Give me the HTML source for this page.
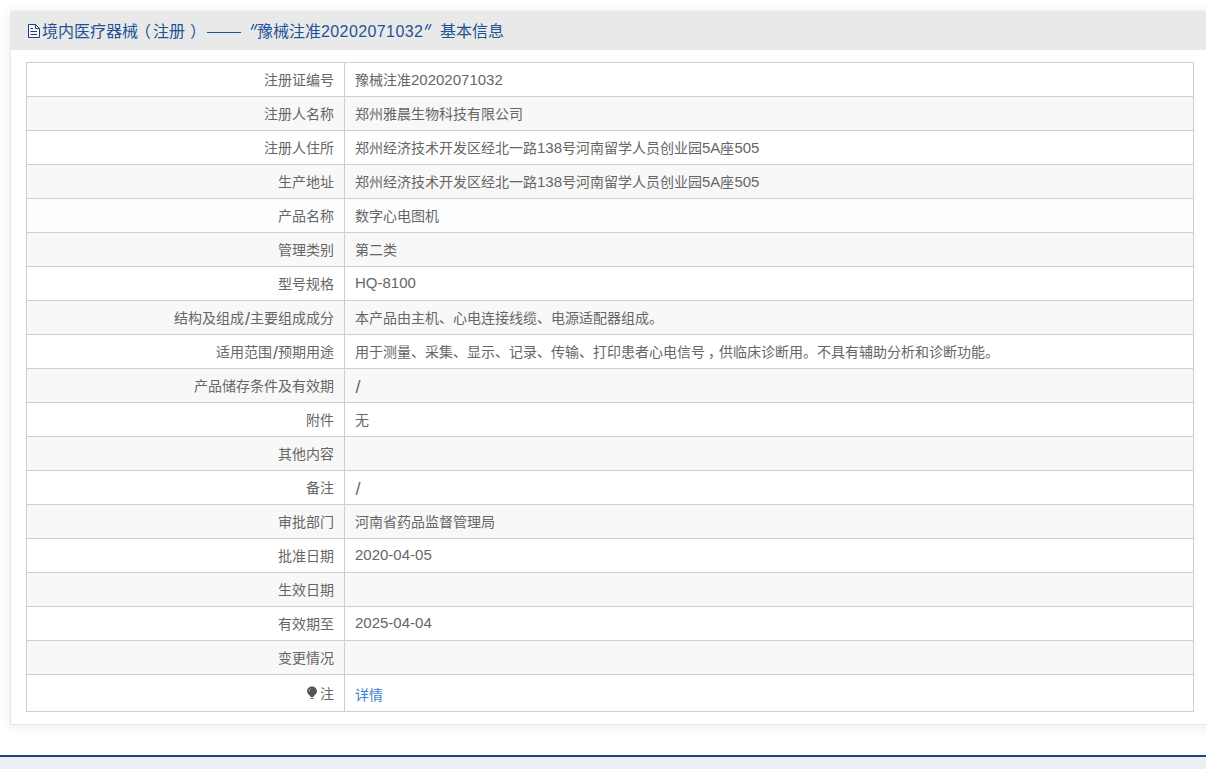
<!DOCTYPE html>
<html lang="zh-CN">
<head>
<meta charset="utf-8">
<style>
html,body{margin:0;padding:0;}
body{width:1206px;height:769px;overflow:hidden;background:#fff;font-family:"Liberation Sans",sans-serif;position:relative;}
.panel{position:absolute;left:10px;top:10px;width:1210px;height:715px;background:#fff;border:1px solid #e6e6e6;border-top-color:#f3f3f3;box-sizing:border-box;box-shadow:0 2px 12px rgba(0,0,0,0.08);}
.hd{position:absolute;left:-1px;top:0;right:0;height:39px;background:#e9e9e9;}
.hd .s{position:absolute;top:10px;font-size:16px;line-height:22px;color:#1e5495;white-space:nowrap;}
.hd .dg{letter-spacing:0.4px;}
.hd .q{position:absolute;}
.hd .dash{position:absolute;top:21px;height:1px;background:#1e5495;}
.hd .ico{position:absolute;left:17px;top:12px;}
table{position:absolute;left:15px;top:51px;width:1168px;border-collapse:collapse;font-size:14px;color:#666;}
td{border:1px solid #cfcfcf;height:34px;padding:0 10px 2px;box-sizing:border-box;white-space:nowrap;}
td.l{width:318px;text-align:right;}
tr.g td{background:#f8f8f8;}
tr.h td{background:#fcfdfe;}
tr.last td{height:37px;padding-top:2px;padding-bottom:0;}
.bulb{display:inline-block;vertical-align:top;margin:2px 3px 0 0;}
.n{font-size:15px;line-height:1;}
.sl{font-size:18px;line-height:1;margin:0 0 0 0.5px;position:relative;top:2px;}
a{color:#3d7fcf;text-decoration:none;}
.foot{position:absolute;left:0;top:755px;width:1206px;height:2px;background:#174a7c;}
.foot2{position:absolute;left:0;top:757px;width:1206px;height:12px;background:#eceef1;}
</style>
</head>
<body>
<div class="panel">
  <div class="hd">
    <svg class="ico" width="15" height="17" viewBox="0 0 15 17"><path d="M1.5 1.5H8.5L12.5 5.5V14.5H1.5Z" fill="#f3f7fb" stroke="#1f3f75" stroke-width="1"/><path d="M8.5 1.5V5.5H12.5" fill="none" stroke="#1f3f75" stroke-width="1"/><path d="M3.5 5.5H6M3.5 8.5H10M3.5 11.5H10" stroke="#1f3f75" stroke-width="1.1"/></svg>
    <span class="s" style="left:32px">境内医疗器械</span>
    <span class="s" style="left:125px">（</span>
    <span class="s" style="left:143px">注册</span>
    <span class="s" style="left:180px">）</span>
    <span class="dash" style="left:197px;width:34px"></span>
    <svg class="q" style="left:240px;top:13px" width="8" height="6" viewBox="0 0 8 6"><path d="M3.6 0.6L1.4 5.2M6.8 0.6L4.6 5.2" stroke="#24589a" stroke-width="1.3" stroke-linecap="round"/></svg>
    <span class="s" style="left:247px">豫械注准</span>
    <span class="s dg" style="left:311px">20202071032</span>
    <svg class="q" style="left:414px;top:13px" width="8" height="6" viewBox="0 0 8 6"><path d="M3.6 0.6L1.4 5.2M6.8 0.6L4.6 5.2" stroke="#24589a" stroke-width="1.3" stroke-linecap="round"/></svg>
    <span class="s" style="left:430px">基本信息</span>
  </div>
  <table>
    <tr><td class="l">注册证编号</td><td>豫械注准<span class="n">20202071032</span></td></tr>
    <tr class="g"><td class="l">注册人名称</td><td>郑州雅晨生物科技有限公司</td></tr>
    <tr><td class="l">注册人住所</td><td>郑州经济技术开发区经北一路<span class="n">138</span>号河南留学人员创业园<span class="n">5A</span>座<span class="n">505</span></td></tr>
    <tr class="g"><td class="l">生产地址</td><td>郑州经济技术开发区经北一路<span class="n">138</span>号河南留学人员创业园<span class="n">5A</span>座<span class="n">505</span></td></tr>
    <tr class="h"><td class="l">产品名称</td><td>数字心电图机</td></tr>
    <tr class="g"><td class="l">管理类别</td><td>第二类</td></tr>
    <tr><td class="l">型号规格</td><td><span class="n">HQ-8100</span></td></tr>
    <tr class="g"><td class="l">结构及组成<span class="sl">/</span>主要组成成分</td><td>本产品由主机、心电连接线缆、电源适配器组成。</td></tr>
    <tr><td class="l">适用范围<span class="sl">/</span>预期用途</td><td>用于测量、采集、显示、记录、传输、打印患者心电信号<span style="position:relative;left:3px">，</span>供临床诊断用。不具有辅助分析和诊断功能。</td></tr>
    <tr class="g"><td class="l">产品储存条件及有效期</td><td><span class="sl">/</span></td></tr>
    <tr><td class="l">附件</td><td>无</td></tr>
    <tr class="g"><td class="l">其他内容</td><td></td></tr>
    <tr><td class="l">备注</td><td><span class="sl">/</span></td></tr>
    <tr class="g"><td class="l">审批部门</td><td>河南省药品监督管理局</td></tr>
    <tr><td class="l">批准日期</td><td><span class="n">2020-04-05</span></td></tr>
    <tr class="g"><td class="l">生效日期</td><td></td></tr>
    <tr><td class="l">有效期至</td><td><span class="n">2025-04-04</span></td></tr>
    <tr class="g"><td class="l">变更情况</td><td></td></tr>
    <tr class="last"><td class="l"><svg class="bulb" width="10" height="13" viewBox="0 0 10 13"><path d="M5 0.6C7.7 0.6 9.9 2.6 9.9 5.3C9.9 7 9 8.1 7.9 9C7.2 9.6 6.6 10.2 6.4 10.9H3.6C3.4 10.2 2.8 9.6 2.1 9C1 8.1 0.1 7 0.1 5.3C0.1 2.6 2.3 0.6 5 0.6Z" fill="#525657"/><path d="M3.4 2.6C2.6 3.3 2.3 4.4 2.5 5.4" stroke="#ddd" stroke-width="0.9" fill="none" opacity="0.8"/><path d="M3.6 12.4H6.4" stroke="#555" stroke-width="1.1"/></svg><span style="position:relative;top:-1px">注</span></td><td><a>详情</a></td></tr>
  </table>
</div>
<div class="foot"></div><div class="foot2"></div>
</body>
</html>
